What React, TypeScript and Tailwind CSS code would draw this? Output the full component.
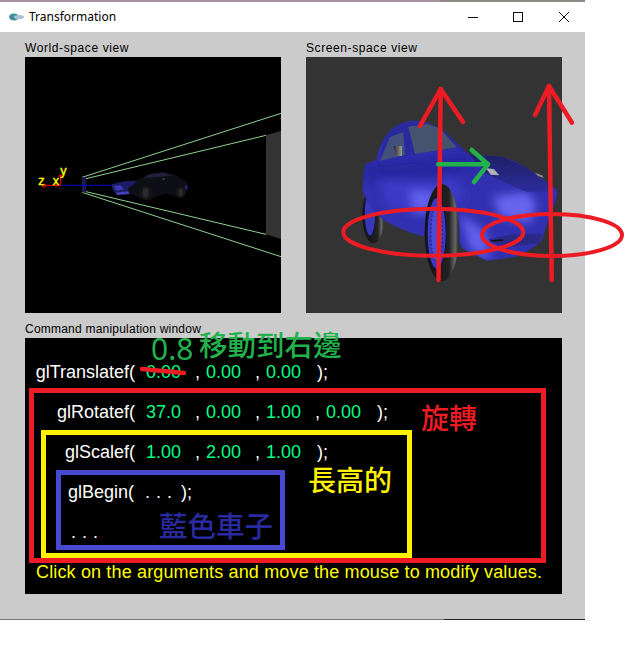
const sans = { fontFamily: '"Liberation Sans", Arial, sans-serif' };

function Dot() {
  return <span className="w-[11px] text-white">,</span>;
}

function Arg({ value }: { value: string }) {
  return (
    <>
      <span className="w-[49px] text-[#00ff80]">{value}</span>
      <Dot />
    </>
  );
}

function Call({ name, args, last }: { name: string; args: string[]; last: string }) {
  return (
    <div className="flex h-[40px] items-center text-[18px] leading-none text-white">
      <span className="w-[110px] shrink-0 text-right">{name}</span>
      <div className="ml-[11px] flex">
        {args.map((a, i) => (
          <Arg key={i} value={a} />
        ))}
        <span className="w-[51px] text-[#00ff80]">{last}</span>
        <span className="text-white">{");"}</span>
      </div>
    </div>
  );
}

function WorldView() {
  return (
    <svg viewBox="75 171 768 768" className="block h-[256px] w-[256px] bg-black">
      <polygon points="798,406 843,392 843,717 798,703" fill="#333333" />
      <g stroke="#8fd08f" strokeWidth="3" fill="none">
        <line x1="246" y1="532" x2="843" y2="340" />
        <line x1="258" y1="536" x2="798" y2="406" />
        <line x1="246" y1="577" x2="843" y2="770" />
        <line x1="258" y1="575" x2="798" y2="703" />
      </g>
      <rect x="246" y="532" width="12" height="45" fill="#1a1a50" />
      <line x1="182" y1="556" x2="340" y2="556" stroke="#0000d0" strokeWidth="3" />
      <g stroke="#ff0000" strokeWidth="3" fill="none">
        <line x1="130" y1="556" x2="182" y2="556" />
        <line x1="182" y1="556" x2="182" y2="528" />
        <circle cx="132" cy="557" r="5" />
        <line x1="168" y1="548" x2="168" y2="562" />
      </g>
      <polygon points="174,530 190,530 182,522" fill="#ff0000" />
      <g fill="#ffff00" stroke="#ffff00" strokeWidth="1" fontSize="38" style={sans}>
        <text x="115" y="554">z</text>
        <text x="158" y="556">x</text>
        <text x="181" y="526">y</text>
      </g>
      {/* car */}
      <polygon
        points="335,553 375,543 415,540 445,522 490,516 525,524 560,545 562,568 550,590 530,592 500,580 470,590 445,600 420,595 395,582 350,582 338,570"
        fill="#0e0e16"
      />
      <polygon points="430,534 450,522 490,518 520,526 480,530" fill="#20203a" />
      <polygon points="335,553 375,544 412,543 385,565 380,580 350,584 338,570" fill="#1d1d66" />
      <polygon points="340,558 362,556 372,568 350,572" fill="#3a3ab4" />
      <polygon points="348,578 385,574 388,582 352,585" fill="#4444c0" />
      <ellipse cx="437" cy="578" rx="19" ry="22" fill="#161616" />
      <ellipse cx="437" cy="578" rx="9" ry="15" fill="#2a2a30" />
      <ellipse cx="542" cy="577" rx="15" ry="17" fill="#161616" />
      <ellipse cx="542" cy="577" rx="7" ry="11" fill="#2a2a30" />
      <rect x="556" y="556" width="6" height="12" fill="#2c2c90" />
      <rect x="488" y="534" width="6" height="6" fill="#3a3a44" />
    </svg>
  );
}

const bodyPath =
  "M68 330 L70 290 L76 252 L108 240 Q118 195 135 170 Q160 135 205 124 Q245 118 285 138 Q320 155 345 185 L390 225 Q440 225 480 230 Q530 240 570 270 L625 310 L652 330 Q650 365 632 400 L605 482 Q570 515 520 532 L440 542 L365 505 L340 430 L270 420 L250 470 Q180 450 130 420 Q85 380 70 340 Z";

function ScreenView() {
  return (
    <svg viewBox="0 0 256 256" className="block h-[256px] w-[256px] bg-[#333333]">
      <defs>
        <linearGradient id="tyre" x1="0" x2="1">
          <stop offset="0" stopColor="#111111" />
          <stop offset="0.7" stopColor="#222222" />
          <stop offset="0.88" stopColor="#666666" />
          <stop offset="1" stopColor="#222222" />
        </linearGradient>
        <linearGradient id="mirror" x1="0" x2="1">
          <stop offset="0" stopColor="#222222" />
          <stop offset="1" stopColor="#9a9a9a" />
        </linearGradient>
        <linearGradient id="hood" x1="0" y1="0" x2="0" y2="1">
          <stop offset="0" stopColor="#1f1f66" />
          <stop offset="1" stopColor="#2c2c9c" />
        </linearGradient>
        <clipPath id="bodyClip">
          <path d={bodyPath} />
        </clipPath>
        <filter id="soft">
          <feGaussianBlur stdDeviation="14" />
        </filter>
      </defs>
      <g transform="translate(34 23) scale(0.3333)">
        <ellipse cx="100" cy="405" rx="33" ry="85" fill="url(#tyre)" />
        <ellipse cx="90" cy="400" rx="17" ry="68" fill="#3838b8" stroke="#15153f" strokeWidth="3" />
        <path d={bodyPath} fill="#3030b0" />
        <g clipPath="url(#bodyClip)">
          <g filter="url(#soft)">
            <polygon points="120,300 340,290 380,350 260,400 140,380" fill="#3a3ac8" />
            <polygon points="210,330 300,340 260,400 220,400" fill="#6060f0" />
            <polygon points="458,350 560,335 590,370 570,430 480,410" fill="#6565f0" />
            <polygon points="360,400 440,460 450,540 390,510" fill="#6060ee" />
            <polygon points="60,250 380,220 420,260 300,300 60,300" fill="#2525a0" />
          </g>
          <polygon points="180,130 240,122 320,155 390,225 350,205 225,222 120,242 130,172" fill="#2a2a9e" />
          <polygon points="390,225 480,228 560,260 625,310 627,335 558,335 500,310 440,282" fill="url(#hood)" />
        </g>
        <polygon points="205,140 262,132 300,145 350,202 225,222" fill="#46536f" />
        <polygon points="120,242 150,172 190,155 195,225" fill="#43507c" />
        <polygon points="160,198 186,198 186,228 170,228" fill="url(#mirror)" />
        <polygon points="438,264 462,268 478,286 452,284" fill="#b0b0b0" />
        <polygon points="585,278 606,286 612,294 594,288" fill="#8a8a94" />
        <polygon points="445,478 520,462 605,462 600,490 510,500 460,490" fill="#2a2a86" />
        <line x1="452" y1="483" x2="490" y2="480" stroke="#111111" strokeWidth="4" />
        <ellipse cx="306" cy="458" rx="52" ry="146" fill="url(#tyre)" />
        <ellipse cx="290" cy="460" rx="29" ry="108" fill="#3a3ac4" stroke="#14143c" strokeWidth="4" />
        <ellipse cx="290" cy="460" rx="17" ry="86" fill="#4a4ad8" stroke="#14143c" strokeWidth="2" strokeDasharray="6 6" />
      </g>
    </svg>
  );
}

function Annotations() {
  return (
    <svg viewBox="0 0 627 648" className="pointer-events-none absolute left-0 top-0 h-[648px] w-[627px]" fill="none" strokeLinecap="round" strokeLinejoin="round">
      <g stroke="#ed1c24" strokeWidth="4.5">
        <polyline points="438.5,280 440.7,89" />
        <polyline points="420,126 440.7,89 463,122" />
        <polyline points="551.7,280 549,86" />
        <polyline points="535,115 549,86 572,122.7" />
      </g>
      <g stroke="#ed1c24" strokeWidth="4">
        <ellipse cx="433.3" cy="232.3" rx="90" ry="23.5" />
        <ellipse cx="552" cy="235" rx="70" ry="21" />
      </g>
      <g stroke="#22b14c" strokeWidth="4.5">
        <polyline points="438.3,164.3 488,164.3" />
        <polyline points="471.7,150 488,164.3 474,182" />
      </g>
      <line x1="142" y1="369" x2="184" y2="373" stroke="#ed1c24" strokeWidth="4.5" />
    </svg>
  );
}

export default function App() {
  return (
    <div className="relative h-[648px] w-[627px] overflow-hidden bg-white" style={sans}>
      <div className="flex h-[2px] w-full">
        <div className="w-[440px] bg-[#a8929f]" />
        <div className="w-[145px] bg-[#8d8a86]" />
      </div>
      <div className="flex h-[30px] w-[585px] items-center bg-white pl-[9px]">
        <svg width="15" height="8" viewBox="0 0 15 8" className="mr-[5px]">
          <ellipse cx="5" cy="4" rx="5" ry="3.5" fill="#3f8f9f" />
          <ellipse cx="10" cy="4" rx="5" ry="2" fill="#a8c4cc" />
        </svg>
        <span className="text-[12px] text-black" style={{ fontFamily: '"Noto Sans", sans-serif' }}>
          Transformation
        </span>
        <svg width="110" height="12" viewBox="0 0 110 12" className="ml-auto mr-[15px]" stroke="#111111" fill="none" strokeWidth="1">
          <line x1="8" y1="6.5" x2="18" y2="6.5" />
          <rect x="53.5" y="1.5" width="9" height="9" />
          <path d="M99 1l10 10M109 1l-10 10" />
        </svg>
      </div>

      <div className="h-[587px] w-[585px] bg-[#cbcbcb] pl-[25px]">
        <div className="flex gap-[25px] pt-[8px]">
          <div>
            <div className="h-[17px] text-[12px] leading-[17px] tracking-[0.6px] text-black">World-space view</div>
            <WorldView />
          </div>
          <div>
            <div className="h-[17px] text-[12px] leading-[17px] tracking-[0.6px] text-black">Screen-space view</div>
            <ScreenView />
          </div>
        </div>
        <div className="mt-[8px] h-[17px] text-[12px] leading-[17px] tracking-[0.22px] text-black">Command manipulation window</div>
        <div className="h-[256px] w-[537px] bg-black pt-[14px]">
          <Call name="glTranslatef(" args={["0.00", "0.00"]} last="0.00" />
          <div className="flex h-[40px] items-center text-[18px] leading-none text-white">
            <span className="w-[110px] shrink-0 text-right">glRotatef(</span>
            <div className="ml-[11px] flex">
              <Arg value="37.0" />
              <Arg value="0.00" />
              <Arg value="1.00" />
              <span className="w-[51px] text-[#00ff80]">0.00</span>
              <span className="text-white">{");"}</span>
            </div>
          </div>
          <Call name="glScalef(" args={["1.00", "2.00"]} last="1.00" />
          <div className="flex h-[40px] items-center text-[18px] leading-none text-white">
            <span className="w-[109px] shrink-0 text-right">glBegin(</span>
            <span className="ml-[11px] w-[36px] tracking-[0.5px]">. . .</span>
            <span>{");"}</span>
          </div>
          <div className="flex h-[40px] items-center pl-[46px] text-[18px] leading-none tracking-[0.5px] text-white">. . .</div>
          <div className="pl-[11px] pt-[10px] text-[18px] leading-[20px] tracking-[0.15px] text-[#ffff00]">
            Click on the arguments and move the mouse to modify values.
          </div>
        </div>
      </div>
      <div className="flex h-[1px] w-[585px]">
        <div className="w-[444px] bg-[#777777]" />
        <div className="w-[141px] bg-[#222222]" />
      </div>

      {/* hand-drawn markup on top of the window */}
      <Annotations />
      <div className="absolute left-[29px] top-[388px] h-[175px] w-[517px] border-[5px] border-[#ed1c24]" />
      <div className="absolute left-[41px] top-[430px] h-[128px] w-[371px] border-[5px] border-[#fff200]" />
      <div className="absolute left-[56px] top-[470px] h-[80px] w-[229px] border-[5px] border-[#4848d0]" />
      <div className="absolute left-[151px] top-[329px] text-[30px] leading-[40px] text-[#22b14c]" style={{ fontFamily: '"Noto Sans", sans-serif' }}>0.8</div>
      <div className="absolute left-[199px] top-[324px] text-[28.5px] font-medium leading-[40px] text-[#22b14c]" style={{ fontFamily: '"Noto Sans CJK TC", sans-serif' }}>移動到右邊</div>
      <div className="absolute left-[421px] top-[397px] text-[28px] font-medium leading-[40px] text-[#ed1c24]" style={{ fontFamily: '"Noto Sans CJK TC", sans-serif' }}>旋轉</div>
      <div className="absolute left-[308px] top-[459px] text-[28px] font-medium leading-[40px] text-[#fff200]" style={{ fontFamily: '"Noto Sans CJK TC", sans-serif' }}>長高的</div>
      <div className="absolute left-[159px] top-[505px] text-[28.5px] font-medium leading-[40px] text-[#2a2aa0]" style={{ fontFamily: '"Noto Sans CJK TC", sans-serif' }}>藍色車子</div>
    </div>
  );
}
